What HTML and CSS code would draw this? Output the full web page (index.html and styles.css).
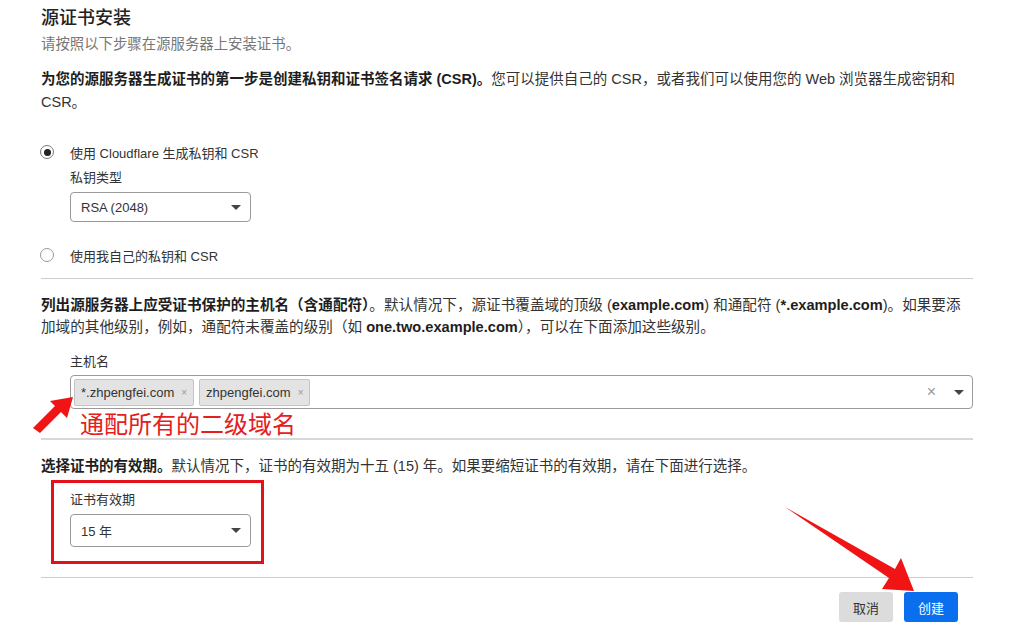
FILE: index.html
```html
<!DOCTYPE html>
<html lang="zh">
<head>
<meta charset="utf-8">
<title>源证书安装</title>
<link rel="stylesheet" href="styles.css">
</head>
<body>
<div class="page">
  <h1 class="title">源证书安装</h1>
  <p class="subtitle">请按照以下步骤在源服务器上安装证书。</p>
  <p class="para p1"><strong>为您的源服务器生成证书的第一步是创建私钥和证书签名请求 (CSR)。</strong>您可以提供自己的 CSR，或者我们可以使用您的 Web 浏览器生成密钥和 CSR。</p>

  <div class="radios">
    <div class="radio-row"><span class="radio checked"></span><span>使用 Cloudflare 生成私钥和 CSR</span></div>
    <div class="field sub">
      <div class="label">私钥类型</div>
      <div class="select"><span>RSA (2048)</span><svg class="caret" width="10" height="5" viewBox="0 0 10 5"><path d="M0 0H10L5 5Z"/></svg></div>
    </div>
    <div class="radio-row second"><span class="radio"></span><span>使用我自己的私钥和 CSR</span></div>
  </div>

  <hr class="divider">

  <p class="para p2"><strong>列出源服务器上应受证书保护的主机名（含通配符）</strong>。默认情况下，源证书覆盖域的顶级 (<strong>example.com</strong>) 和通配符 (<strong>*.example.com</strong>)。如果要添加域的其他级别，例如，通配符未覆盖的级别（如 <strong>one.two.example.com</strong>），可以在下面添加这些级别。</p>

  <div class="field host">
    <div class="label">主机名</div>
    <div class="multi">
      <span class="tag">*.zhpengfei.com<span class="tag-x">×</span></span>
      <span class="tag">zhpengfei.com<span class="tag-x">×</span></span>
      <span class="spacer"></span>
      <span class="clear">×</span>
      <svg class="caret" width="10" height="5" viewBox="0 0 10 5"><path d="M0 0H10L5 5Z"/></svg>
    </div>
    <div class="note">通配所有的二级域名</div>
  </div>

  <hr class="divider thick">

  <p class="para p3"><strong>选择证书的有效期。</strong>默认情况下，证书的有效期为十五 (15) 年。如果要缩短证书的有效期，请在下面进行选择。</p>

  <div class="highlight">
    <div class="label">证书有效期</div>
    <div class="select tall"><span>15 年</span><svg class="caret" width="10" height="5" viewBox="0 0 10 5"><path d="M0 0H10L5 5Z"/></svg></div>
  </div>

  <hr class="divider">

  <div class="actions">
    <button class="btn cancel">取消</button>
    <button class="btn primary">创建</button>
  </div>

  <svg class="overlay" width="1024" height="644" viewBox="0 0 1024 644">
    <polygon class="red" points="73,397 67,418 61,412 40,433 33,428 55,406 50,401"/>
    <polygon class="red" points="785,507 895,569 901,558 914,591 882,589 889,578"/>
  </svg>
</div>
</body>
</html>
```

FILE: styles.css
```css
html, body {
  margin: 0;
  padding: 0;
  background: #fff;
}

body {
  font-family: "Liberation Sans", "Noto Sans CJK SC", sans-serif;
  color: #333;
}

.page {
  position: relative;
  width: 1024px;
  height: 644px;
  box-sizing: border-box;
  padding: 6px 51px 0 41px;
  background: #fff;
  overflow: hidden;
}

.title {
  margin: 0;
  font-size: 18px;
  line-height: 24px;
  font-weight: 500;
  color: #222;
}

.subtitle {
  margin: 4px 0 0;
  font-size: 14.4px;
  line-height: 20px;
  color: #777;
}

.para {
  margin: 0;
  font-size: 14.5px;
  line-height: 23px;
  color: #333;
}

.para strong {
  color: #1e1e1e;
  font-weight: 700;
}

.p1 {
  margin-top: 14px;
}

.radios {
  margin-top: 28px;
}

.radio-row {
  display: flex;
  align-items: center;
  gap: 16px;
  height: 20px;
  font-size: 13px;
  color: #333;
}

.radio-row.second {
  margin-top: 23px;
}

.radio {
  width: 14px;
  height: 14px;
  margin-left: -1px;
  box-sizing: border-box;
  border: 1px solid #9a9a9a;
  border-radius: 50%;
  display: flex;
  align-items: center;
  justify-content: center;
  background: #fff;
}

.radio.checked {
  border-color: #777;
}

.radio.checked::after {
  content: "";
  width: 7px;
  height: 7px;
  border-radius: 50%;
  background: #222;
}

.field.sub {
  margin: 6px 0 0 29px;
}

.label {
  font-size: 13px;
  line-height: 20px;
  color: #333;
}

.select {
  margin-top: 4px;
  width: 181px;
  height: 30px;
  box-sizing: border-box;
  border: 1px solid #9a9a9a;
  border-radius: 4px;
  display: flex;
  align-items: center;
  justify-content: space-between;
  padding: 0 9px 0 10px;
  font-size: 13px;
  color: #333;
  background: #fff;
}

.select.tall {
  height: 33px;
}

.caret {
  fill: #444;
  display: block;
}

.divider {
  margin: 13px 0 0;
  border: 0;
  border-top: 1px solid #cdcdcd;
  height: 0;
}

.divider.thick {
  margin-top: 1px;
  border-top: 2px solid #d8d8d8;
}

.p2 {
  margin-top: 15px;
  font-size: 14.6px;
  line-height: 22px;
}

.field.host {
  margin: 14px 0 0 29px;
}

.multi {
  margin-top: 3px;
  height: 34px;
  box-sizing: border-box;
  border: 1px solid #9a9a9a;
  border-radius: 4px;
  display: flex;
  align-items: center;
  gap: 5px;
  padding: 0 8px 0 3px;
  background: #fff;
}

.tag {
  height: 27px;
  box-sizing: border-box;
  display: flex;
  align-items: center;
  gap: 7px;
  padding: 0 6px 0 6px;
  background: #e3e3e3;
  border: 1px solid #c4c4c4;
  border-radius: 2px;
  font-size: 13px;
  color: #333;
}

.tag-x {
  font-size: 10px;
  color: #999;
}

.spacer {
  flex: 1;
}

.clear {
  font-size: 16px;
  color: #999;
  margin-right: 13px;
  font-weight: 300;
}

.note {
  margin: 0 0 0 10px;
  font-size: 24px;
  line-height: 28px;
  color: #e3201b;
  font-family: "Noto Sans CJK SC", sans-serif;
}

.p3 {
  margin-top: 15px;
  line-height: 22px;
}

.highlight {
  margin: 3px 0 0 10px;
  width: 213px;
  box-sizing: border-box;
  border: 3px solid #e3121a;
  padding: 7px 0 14px 16px;
}

.actions {
  margin-top: 14px;
  display: flex;
  justify-content: flex-end;
  gap: 11px;
  padding-right: 15px;
}

.btn {
  width: 54px;
  height: 30px;
  border: 0;
  border-radius: 3px;
  font-family: "Liberation Sans", "Noto Sans CJK SC", sans-serif;
  font-size: 13px;
  padding: 0;
}

.btn.cancel {
  background: #dcdcdc;
  color: #333;
}

.btn.primary {
  background: #0a6fef;
  color: #fff;
}

.overlay {
  position: absolute;
  left: 0;
  top: 0;
  pointer-events: none;
}

.red {
  fill: #f01414;
}
```
